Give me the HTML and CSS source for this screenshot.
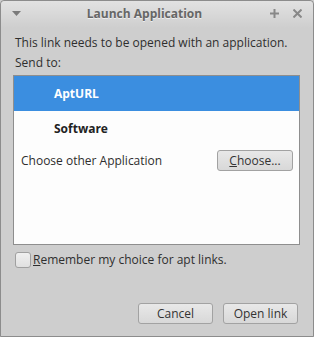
FILE: index.html
```html
<!DOCTYPE html>
<html lang="en">
<head>
  <meta charset="UTF-8">
  <title>Launch Application</title>
  <link rel="stylesheet" href="styles.css">
</head>
<body>
  <div class="window">
    <div class="titlebar">
      <span class="menu-btn"><svg width="9" height="5" viewBox="0 0 9 5"><path d="M0 0h9L4.5 5z" fill="#7a7a7a"/></svg></span>
      <span class="title">Launch Application</span>
      <span class="tb-btn"><svg width="9" height="9" viewBox="0 0 9 9"><path d="M4.5 0v9M0 4.5h9" stroke="#888" stroke-width="2"/></svg></span>
      <span class="tb-btn"><svg width="9" height="9" viewBox="0 0 9 9"><path d="M0.5 0.5l8 8M8.5 0.5l-8 8" stroke="#888" stroke-width="2"/></svg></span>
    </div>
    <div class="body">
      <p class="msg">This link needs to be opened with an application.</p>
      <p class="label">Send to:</p>
      <div class="list">
        <div class="row selected">AptURL</div>
        <div class="row">Software</div>
        <div class="row other">
          <span>Choose other Application</span>
          <button class="btn small"><u>C</u>hoose...</button>
        </div>
      </div>
      <label class="check"><span class="box"></span><span><u>R</u>emember my choice for apt links.</span></label>
      <div class="actions">
        <button class="btn">Cancel</button>
        <button class="btn">Open link</button>
      </div>
    </div>
  </div>
</body>
</html>
```

FILE: styles.css
```css
* { margin: 0; padding: 0; box-sizing: border-box; }
html, body { width: 314px; height: 337px; overflow: hidden; }
body { font-family: "Open Sans", "Noto Sans", sans-serif; font-size: 12px; color: #2e2e2e; background: #cecece; white-space: nowrap; }
.window { width: 314px; height: 337px; border: 1px solid #8c8c8c; border-radius: 4px 4px 0 0; background: #cecece; display: flex; flex-direction: column; }
.titlebar { height: 27px; display: flex; align-items: center; padding: 0 4px 2px 11px; background: linear-gradient(#e2e2e2, #d4d4d4 70%, #cecece); border-radius: 4px 4px 0 0; }
.menu-btn { width: 20px; display: flex; align-items: center; }
.title { flex: 1; text-align: center; font-weight: bold; color: #666; text-shadow: 0 1px 0 #eee; padding-right: 6px; }
.tb-btn { width: 23px; display: flex; justify-content: center; }
.body { flex: 1; padding: 6px 13px 12px 12px; display: flex; flex-direction: column; }
.msg { line-height: 18px; margin-left: 2px; }
.label { line-height: 18px; margin-top: 2px; margin-left: 2px; }
.list { margin-top: 3px; height: 170px; background: #fdfdfd; border: 1px solid #8e8e8e; }
.row { height: 35px; display: flex; align-items: center; padding-left: 40px; font-weight: bold; color: #222; }
.row.selected { background: #3b8ee0; color: #fff; }
.row.other { font-weight: normal; padding-left: 7px; padding-right: 6px; justify-content: space-between; height: 28px; color: #2e2e2e; }
.btn { font-family: inherit; font-size: 12px; color: #333; background: linear-gradient(#e8e8e8, #d8d8d8); border: 1px solid #a2a2a2; border-radius: 3px; height: 23px; padding: 0 6px; white-space: nowrap; }
.btn.small { width: 76px; height: 21px; }
.check { display: flex; align-items: center; margin-top: 6px; margin-left: 2px; gap: 2px; }
.box { width: 16px; height: 16px; border: 1px solid #a0a0a0; border-radius: 3px; background: linear-gradient(#f0f0f0, #e0e0e0); }
.actions { margin-top: auto; margin-right: 2px; display: flex; justify-content: flex-end; gap: 10px; }
.actions .btn { width: 75px; height: 21px; }
```
